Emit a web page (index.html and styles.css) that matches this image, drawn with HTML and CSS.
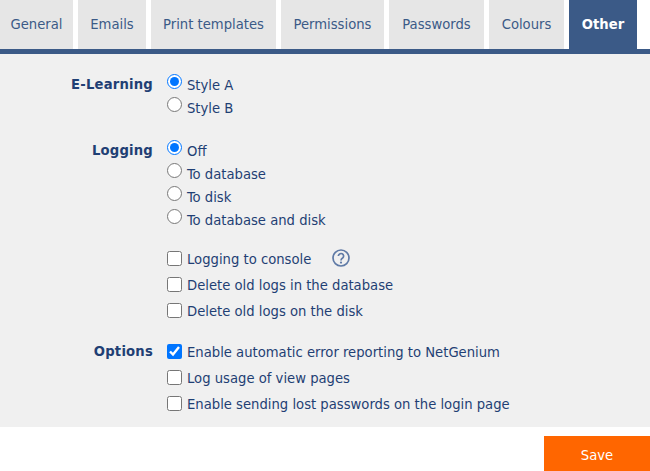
FILE: index.html
```html
<!DOCTYPE html>
<html lang="en">
<head>
<meta charset="utf-8">
<title>Settings</title>
<link rel="stylesheet" href="styles.css">
</head>
<body>
<nav class="tabs">
  <a class="tab w-general">General</a>
  <a class="tab w-emails">Emails</a>
  <a class="tab w-print">Print templates</a>
  <a class="tab w-perm">Permissions</a>
  <a class="tab w-pass">Passwords</a>
  <a class="tab w-col">Colours</a>
  <a class="tab tab-active w-other">Other</a>
</nav>
<main class="panel">
  <section class="group g-elearning">
    <div class="label">E-Learning</div>
    <div class="fields radios">
      <label class="opt"><input type="radio" name="el" checked><span>Style A</span></label>
      <label class="opt"><input type="radio" name="el"><span>Style B</span></label>
    </div>
  </section>
  <section class="group g-logging">
    <div class="label">Logging</div>
    <div class="fields radios">
      <label class="opt"><input type="radio" name="lg" checked><span>Off</span></label>
      <label class="opt"><input type="radio" name="lg"><span>To database</span></label>
      <label class="opt"><input type="radio" name="lg"><span>To disk</span></label>
      <label class="opt"><input type="radio" name="lg"><span>To database and disk</span></label>
    </div>
  </section>
  <section class="group g-checks">
    <div class="label"></div>
    <div class="fields checks">
      <label class="opt"><input type="checkbox"><span>Logging to console</span>
        <svg class="help" width="18" height="18" viewBox="0 0 18 18" aria-hidden="true"><circle cx="9" cy="9" r="8" fill="none" stroke="#5f7aa6" stroke-width="1.7"/><path d="M6.4 7a2.6 2.5 0 1 1 4.2 2c-1 .7-1.6 1.2-1.6 2.4" fill="none" stroke="#5f7aa6" stroke-width="1.7"/><circle cx="9" cy="13.6" r="1.1" fill="#5f7aa6"/></svg>
      </label>
      <label class="opt"><input type="checkbox"><span>Delete old logs in the database</span></label>
      <label class="opt"><input type="checkbox"><span>Delete old logs on the disk</span></label>
    </div>
  </section>
  <section class="group g-options">
    <div class="label">Options</div>
    <div class="fields checks">
      <label class="opt"><input type="checkbox" checked><span>Enable automatic error reporting to NetGenium</span></label>
      <label class="opt"><input type="checkbox"><span>Log usage of view pages</span></label>
      <label class="opt"><input type="checkbox"><span>Enable sending lost passwords on the login page</span></label>
    </div>
  </section>
</main>
<footer class="actions"><button class="save" type="button">Save</button></footer>
</body>
</html>
```

FILE: styles.css
```css
* { box-sizing: border-box; }
html, body { margin: 0; padding: 0; background: #fff; }
body {
  width: 650px;
  height: 471px;
  overflow: hidden;
  font-family: "DejaVu Sans Condensed", "DejaVu Sans", sans-serif;
  font-stretch: condensed;
  font-size: 14.67px;
  color: #1f3f74;
}
.tabs {
  display: flex;
  gap: 5px;
  height: 54px;
  border-bottom: 5px solid #3b5a87;
}
.tab {
  display: flex;
  align-items: center;
  justify-content: center;
  background: #e6e6e6;
  color: #3b5a87;
  padding-bottom: 3px;
}
.w-general { width: 73px; }
.w-emails { width: 68px; }
.w-print { width: 125px; }
.w-perm { width: 103px; }
.w-pass { width: 95px; }
.w-col { width: 75px; }
.w-other { width: 68px; }
.tab-active { background: #3b5a87; color: #fff; font-weight: 700; }
.panel {
  height: 373px;
  background: #f0f0f0;
  padding-top: 19px;
}
.group { display: grid; grid-template-columns: 153px 1fr; column-gap: 14px; }
.g-logging { margin-top: 20px; }
.g-checks { margin-top: 14px; }
.g-options { margin-top: 15px; }
.label { text-align: right; font-weight: 700; line-height: 22px; color: #1f3f74; letter-spacing: 0.2px; }
.g-options .label { line-height: 26px; }
.fields { display: flex; flex-direction: column; }
.opt { display: flex; align-items: center; gap: 5px; }
.radios .opt { height: 23px; }
.checks .opt { height: 26px; }
.opt input { width: 15px; height: 15px; margin: 0; flex: none; accent-color: #0075ff; }
.radios input { position: relative; top: -3px; }
.help { margin-left: 16px; }
.actions { display: flex; justify-content: flex-end; padding-top: 9px; }
.save {
  width: 106px;
  height: 35px;
  border: 0;
  padding: 2px 0 0;
  background: #ff6600;
  color: #fff;
  font: inherit;
}
```
